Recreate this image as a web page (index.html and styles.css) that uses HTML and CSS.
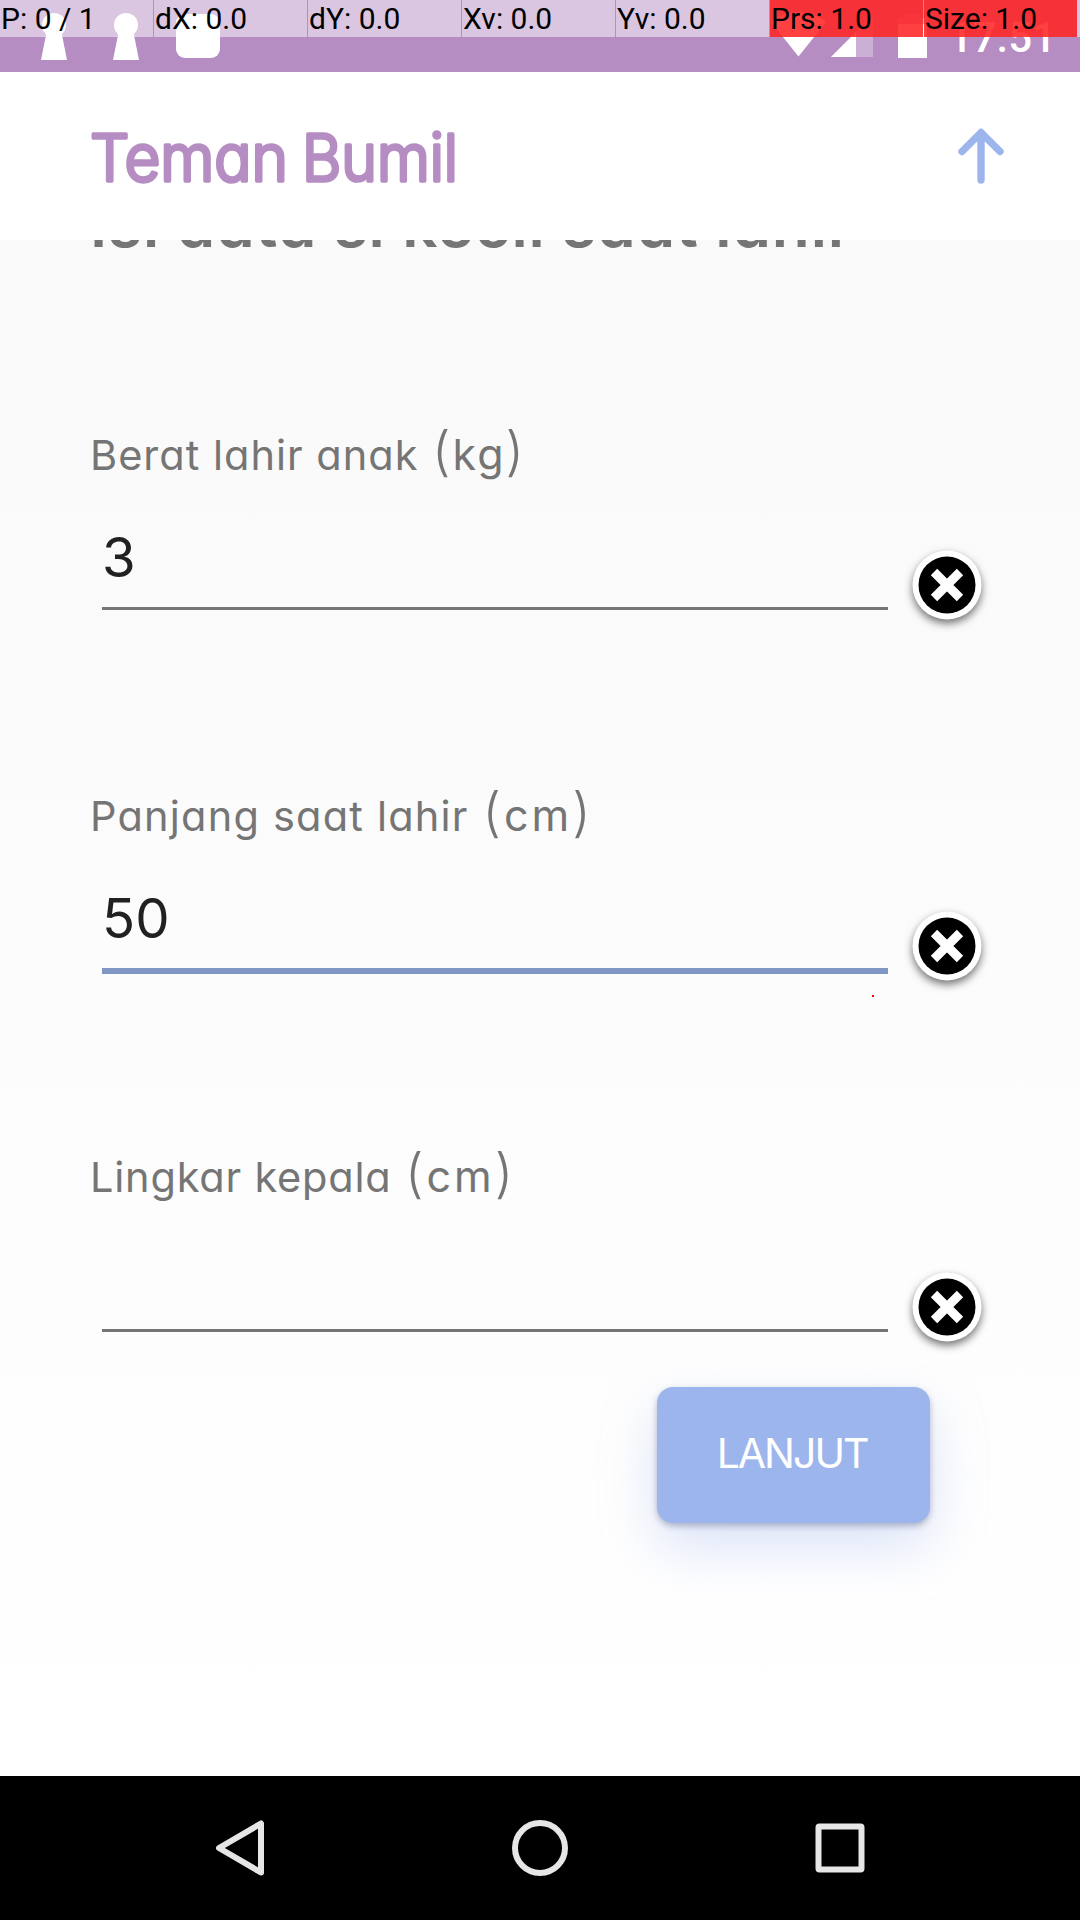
FILE: index.html
```html
<!DOCTYPE html>
<html lang="id">
<head>
<meta charset="utf-8">
<title>Teman Bumil</title>
<link rel="stylesheet" href="styles.css">
</head>
<body>
<div class="screen">
  <div class="status">
    <svg class="status-icons" width="1080" height="72" viewBox="0 0 1080 72" fill="#fff">
      <g id="keyhole"><circle cx="54" cy="25" r="12"/><path d="M48 30h12l2 5 5 25H41l5-25z"/></g>
      <use href="#keyhole" x="72"/>
      <rect x="176" y="14" width="44" height="44" rx="9"/>
      <path d="M798.5 56.5 771 22a44 44 0 0 1 55 0z"/>
      <path d="M831 57 873 15v42z" opacity=".3"/>
      <path d="M831 57 856 32v25z"/>
      <path d="M898 24v-6h8v-4h12v4h9v6z" opacity=".3"/>
      <path d="M898 24h29v34h-29z"/>
    </svg>
    <time class="clock">17.51</time>
    <div class="pointer-bar">
      <span>P: 0 / 1</span><span>dX: 0.0</span><span>dY: 0.0</span><span>Xv: 0.0</span><span>Yv: 0.0</span><span class="hot">Prs: 1.0</span><span class="hot">Size: 1.0</span><span class="rest"></span>
    </div>
  </div>
  <header class="app-bar">
    <svg class="logo" width="375" height="90" viewBox="0 0 375 90">
      <text class="logo-text" x="2" y="67.5" textLength="198" lengthAdjust="spacingAndGlyphs">Teman</text>
      <text class="logo-text" x="214" y="67.5" textLength="156" lengthAdjust="spacingAndGlyphs">Bumil</text>
    </svg>
    <svg class="up" width="50" height="60" viewBox="0 0 50 60" fill="none" stroke="#9db5ed" stroke-width="7.4" stroke-linecap="round" stroke-linejoin="round"><path d="M25 53V6M6 24.5 25 5.5l19 19"/></svg>
  </header>
  <main class="content">
    <h1 class="title">Isi data si kecil saat lahir</h1>
    <section class="field">
      <label class="label weight">Berat lahir anak <span class="unit"><span class="paren">(</span>kg<span class="paren">)</span></span></label>
      <div class="row"><div class="input">3</div><svg class="clear" viewBox="0 0 84 84"><use href="#x"/></svg></div>
    </section>
    <section class="field">
      <label class="label length">Panjang saat lahir <span class="unit wide"><span class="paren">(</span>cm<span class="paren">)</span></span></label>
      <div class="row"><div class="input focused">50<i class="touch"></i></div><svg class="clear" viewBox="0 0 84 84"><use href="#x"/></svg></div>
    </section>
    <section class="field">
      <label class="label head">Lingkar kepala <span class="unit wide"><span class="paren">(</span>cm<span class="paren">)</span></span></label>
      <div class="row"><div class="input"></div><svg class="clear" viewBox="0 0 84 84">
        <g id="x"><circle cx="42" cy="42" r="34.5" fill="#fff"/><circle cx="42" cy="42" r="28.5" fill="#000"/><path d="M29 29 55 55M55 29 29 55" stroke="#fff" stroke-width="9"/></g></svg></div>
    </section>
    <button class="next" type="button">LANJUT</button>
  </main>
  <nav class="nav">
    <svg width="60" height="60" viewBox="0 0 60 60"><path d="M51 5.5v49L9 30z"/></svg>
    <svg width="60" height="60" viewBox="0 0 60 60"><circle cx="30" cy="30" r="25"/></svg>
    <svg width="60" height="60" viewBox="0 0 60 60"><rect x="8.5" y="8.5" width="43" height="43" rx="1"/></svg>
  </nav>
</div>
</body>
</html>
```
FILE: styles.css
```css
* { box-sizing: border-box; }
body { margin: 0; background: #fff; font-family: Inter, "Open Sans", sans-serif; font-feature-settings: "cv11"; }
.screen { width: 1080px; height: 1920px; display: flex; flex-direction: column; overflow: hidden; }

.status { position: relative; height: 72px; background: #b58dc2; }
.status-icons { display: block; }
.clock { position: absolute; right: 24px; top: 17px; font: 500 42px/42px Roboto, sans-serif; color: #fff; }
.pointer-bar { position: absolute; left: 0; top: 0; display: flex; gap: 1px; }
.pointer-bar span { width: 153px; height: 37px; padding-left: 1px; background: rgba(255,255,255,.5); font: 400 30px/37px Roboto, sans-serif; color: #000; white-space: nowrap; }
.pointer-bar .hot { background: linear-gradient(rgba(255,0,0,.75), rgba(255,0,0,.75)), rgba(255,255,255,.5); }
.pointer-bar .rest { width: 3px; margin-left: -1px; }

.app-bar { height: 168px; background: #fff; display: flex; justify-content: space-between; align-items: flex-start; padding: 41px 74px 0 88px; }
.logo { overflow: visible; }
.logo-text { font-size: 65px; font-weight: 300; fill: #b58dc2; stroke: #b58dc2; stroke-width: 3.6px; stroke-linejoin: round; }
.up { margin-top: 14px; }

.content { height: 1536px; overflow: hidden; background: linear-gradient(#f9f9f9, #fff); display: flex; flex-direction: column; }
.title { margin: -56px 0 0; padding-left: 90px; height: 81px; font-size: 62px; line-height: 81px; font-weight: 600; letter-spacing: .85px; color: #757575; white-space: nowrap; }
.field { height: 361px; padding: 159px 0 0 90px; }
.label { display: block; height: 60px; line-height: 60px; font-size: 41.5px; color: #757575; white-space: nowrap; }
.weight { letter-spacing: 1px; }
.length { letter-spacing: 1.2px; }
.head { letter-spacing: .8px; }
.unit { margin-left: 1px; letter-spacing: 2px; font-size: 43px; }
.wide { letter-spacing: 3px; }
.paren { font-size: 53px; font-weight: 300; line-height: 1; }
.row { display: flex; gap: 16px; align-items: flex-start; }
.input { position: relative; margin: 2px 0 0 12px; width: 786px; height: 124px; border-bottom: 3px solid #757575; padding-top: 41px; font-size: 54.5px; line-height: 60px; color: #212121; }
.focused { height: 127px; border-bottom: 6px solid #8097c6; }
.touch { position: absolute; right: 14px; bottom: -29px; width: 2px; height: 2px; background: #f00; }
.clear { width: 84px; height: 84px; margin: 59px 0 0 .6px; filter: drop-shadow(0 4px 4px rgba(0,0,0,.55)); }
.next { margin: 39px 0 0 657px; width: 273px; height: 136px; flex: none; padding: 0 3px 4px 0; border: 0; border-radius: 16px; background: #9db5ed; color: #fff; font: 400 41px Inter, sans-serif; letter-spacing: -2px; box-shadow: 0 3px 6px rgba(60,70,110,.35), 0 24px 54px rgba(157,181,237,.36); }
.nav { height: 144px; background: #000; display: flex; justify-content: space-between; padding: 42px 210px 0; }
.nav svg { fill: none; stroke: #e6e6e6; stroke-width: 6; stroke-linejoin: round; }
```
